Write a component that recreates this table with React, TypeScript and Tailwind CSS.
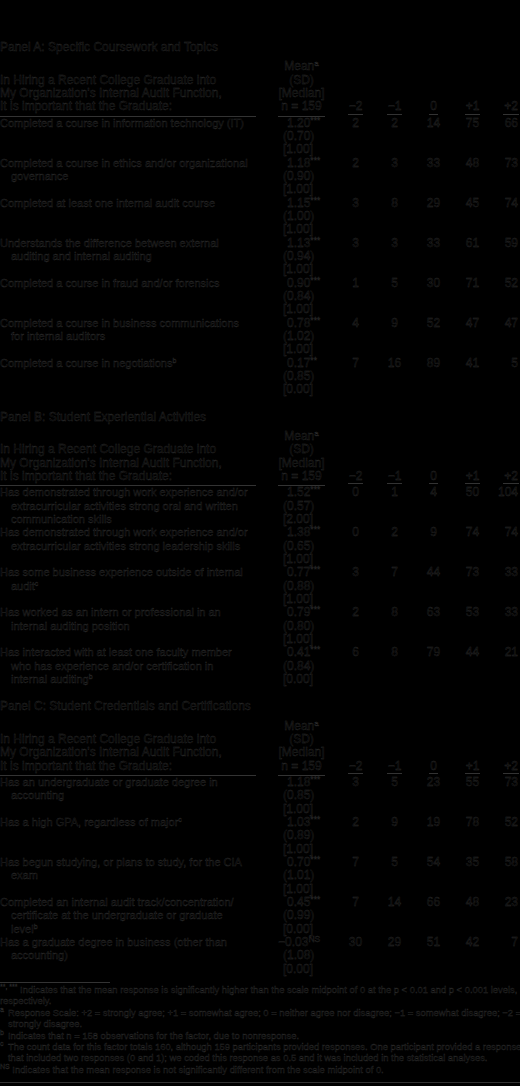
type Row = {
  label: string[];
  sup?: string;
  mean: string;
  stars: string;
  sd: string;
  median: string;
  counts: number[];
};

type Panel = {
  title: string;
  rows: Row[];
};

const panels: Panel[] = [
  {
    title: 'Panel A: Specific Coursework and Topics',
    rows: [
      { label: ['Completed a course in information technology (IT)'], mean: '1.20', stars: '***', sd: '0.70', median: '1.00', counts: [2, 2, 14, 75, 66] },
      { label: ['Completed a course in ethics and/or organizational', 'governance'], mean: '1.18', stars: '***', sd: '0.90', median: '1.00', counts: [2, 3, 33, 48, 73] },
      { label: ['Completed at least one internal audit course'], mean: '1.15', stars: '***', sd: '1.00', median: '1.00', counts: [3, 8, 29, 45, 74] },
      { label: ['Understands the difference between external', 'auditing and internal auditing'], mean: '1.13', stars: '***', sd: '0.94', median: '1.00', counts: [3, 3, 33, 61, 59] },
      { label: ['Completed a course in fraud and/or forensics'], mean: '0.90', stars: '***', sd: '0.84', median: '1.00', counts: [1, 5, 30, 71, 52] },
      { label: ['Completed a course in business communications', 'for internal auditors'], mean: '0.78', stars: '***', sd: '1.02', median: '1.00', counts: [4, 9, 52, 47, 47] },
      { label: ['Completed a course in negotiations'], sup: 'b', mean: '0.17', stars: '**', sd: '0.85', median: '0.00', counts: [7, 16, 89, 41, 5] },
    ],
  },
  {
    title: 'Panel B: Student Experiential Activities',
    rows: [
      { label: ['Has demonstrated through work experience and/or', 'extracurricular activities strong oral and written', 'communication skills'], mean: '1.52', stars: '***', sd: '0.57', median: '2.00', counts: [0, 1, 4, 50, 104] },
      { label: ['Has demonstrated through work experience and/or', 'extracurricular activities strong leadership skills'], mean: '1.38', stars: '***', sd: '0.65', median: '1.00', counts: [0, 2, 9, 74, 74] },
      { label: ['Has some business experience outside of internal', 'audit'], sup: 'c', mean: '0.77', stars: '***', sd: '0.88', median: '1.00', counts: [3, 7, 44, 73, 33] },
      { label: ['Has worked as an intern or professional in an', 'internal auditing position'], mean: '0.79', stars: '***', sd: '0.80', median: '1.00', counts: [2, 8, 63, 53, 33] },
      { label: ['Has interacted with at least one faculty member', 'who has experience and/or certification in', 'internal auditing'], sup: 'b', mean: '0.41', stars: '***', sd: '0.84', median: '0.00', counts: [6, 8, 79, 44, 21] },
    ],
  },
  {
    title: 'Panel C: Student Credentials and Certifications',
    rows: [
      { label: ['Has an undergraduate or graduate degree in', 'accounting'], mean: '1.18', stars: '***', sd: '0.85', median: '1.00', counts: [3, 5, 23, 55, 73] },
      { label: ['Has a high GPA, regardless of major'], sup: 'c', mean: '1.03', stars: '***', sd: '0.89', median: '1.00', counts: [2, 9, 19, 78, 52] },
      { label: ['Has begun studying, or plans to study, for the CIA', 'exam'], mean: '0.70', stars: '***', sd: '1.01', median: '1.00', counts: [7, 5, 54, 35, 58] },
      { label: ['Completed an internal audit track/concentration/', 'certificate at the undergraduate or graduate', 'level'], sup: 'b', mean: '0.45', stars: '***', sd: '0.99', median: '0.00', counts: [7, 14, 66, 48, 23] },
      { label: ['Has a graduate degree in business (other than', 'accounting)'], mean: '\u22120.03', stars: 'NS', sd: '1.08', median: '0.00', counts: [30, 29, 51, 42, 7] },
    ],
  },
];

const scale = ['\u22122', '\u22121', '0', '+1', '+2'];

const Sup = ({ children, size = 'text-[7px]' }: { children: React.ReactNode; size?: string }) => (
  <span className={`relative -top-[4px] leading-none ${size}`}>{children}</span>
);

// the +2 column sits at the picture's right edge, so it is right-aligned
const cellAlign = (i: number) => (i === 4 ? 'text-right pr-[2px]' : 'text-center');

function TableHeader() {
  return (
    <div className="grid grid-cols-[270px_66px_repeat(4,39px)_28px] items-end text-[12px]">
      <div className="w-[256px] border-b border-[#333] pb-[2px] whitespace-nowrap">
        <div>In Hiring a Recent College Graduate into</div>
        <div>My Organization&apos;s Internal Audit Function,</div>
        <div>It is important that the Graduate:</div>
      </div>
      <div className="ml-[8px] w-[47px] border-b border-[#333] pb-[2px] text-center whitespace-nowrap">
        <div>
          Mean<Sup size="text-[8px]">a</Sup>
        </div>
        <div>(SD)</div>
        <div>[Median]</div>
        <div>n = 159</div>
      </div>
      {scale.map((s, i) => (
        <div key={s} className={`flex pb-[2px] ${i === 4 ? 'justify-end pr-[1px]' : 'justify-center'}`}>
          <span className="border-b border-[#333] px-[1px]">{s}</span>
        </div>
      ))}
    </div>
  );
}

function TableRow({ row }: { row: Row }) {
  const negative = row.mean.startsWith('\u2212');
  return (
    <div className="grid h-[40px] grid-cols-[270px_66px_repeat(4,39px)_28px]">
      <div className="whitespace-nowrap">
        {row.label.map((line, i) => (
          <div key={i} className={i > 0 ? 'pl-[11px]' : ''}>
            {line}
            {i === row.label.length - 1 && row.sup && <Sup>{row.sup}</Sup>}
          </div>
        ))}
      </div>
      <div className="pl-[13px] text-[12px] whitespace-nowrap">
        <div className={negative ? '-ml-[5px]' : 'pl-[4px]'}>
          {row.mean}
          <Sup size="text-[8.5px]">{row.stars}</Sup>
        </div>
        <div>({row.sd})</div>
        <div>[{row.median}]</div>
      </div>
      {row.counts.map((c, i) => (
        <div key={i} className={`text-[12px] ${cellAlign(i)}`}>
          {c}
        </div>
      ))}
    </div>
  );
}

export default function App() {
  return (
    <div className="h-[1086px] w-[520px] overflow-hidden bg-black font-['Liberation_Sans',Arial,sans-serif] text-[11px] leading-[13.33px] text-black [-webkit-text-stroke:0.35px_#2e2e2e]">
      <div className="w-[520px] pt-[41px]">
        {panels.map((panel, p) => (
          <div key={panel.title} className={p > 0 ? 'mt-[14px]' : ''}>
            <div className="mb-[6px] text-[12px]">{panel.title}</div>
            <TableHeader />
            {panel.rows.map((row, r) => (
              <TableRow key={r} row={row} />
            ))}
          </div>
        ))}

        <div className="mt-[6px] w-[110px] border-t border-[#333]" />
        <div className="overflow-hidden pt-[1px] text-[9.4px] leading-[11.4px] whitespace-nowrap">
          <div>
            <Sup>**, ***</Sup> Indicates that the mean response is significantly higher than the scale midpoint of 0 at the p &lt; 0.01 and p &lt; 0.001 levels,
          </div>
          <div>respectively.</div>
          <div>
            <span className="inline-block w-[8px]">
              <Sup>a</Sup>
            </span>
            Response Scale: +2 = strongly agree; +1 = somewhat agree; 0 = neither agree nor disagree; {'\u2212'}1 = somewhat disagree; {'\u2212'}2 =
          </div>
          <div className="pl-[8px]">strongly disagree.</div>
          <div>
            <span className="inline-block w-[8px]">
              <Sup>b</Sup>
            </span>
            Indicates that n = 158 observations for the factor, due to nonresponse.
          </div>
          <div>
            <span className="inline-block w-[8px]">
              <Sup>c</Sup>
            </span>
            The count data for this factor totals 160, although 159 participants provided responses. One participant provided a response
          </div>
          <div className="pl-[8px]">
            that included two responses (0 and 1); we coded this response as 0.5 and it was included in the statistical analyses.
          </div>
          <div>
            <Sup>NS</Sup> Indicates that the mean response is not significantly different from the scale midpoint of 0.
          </div>
        </div>
        <div className="mt-[7px] w-full border-t border-[#333]" />
      </div>
    </div>
  );
}
